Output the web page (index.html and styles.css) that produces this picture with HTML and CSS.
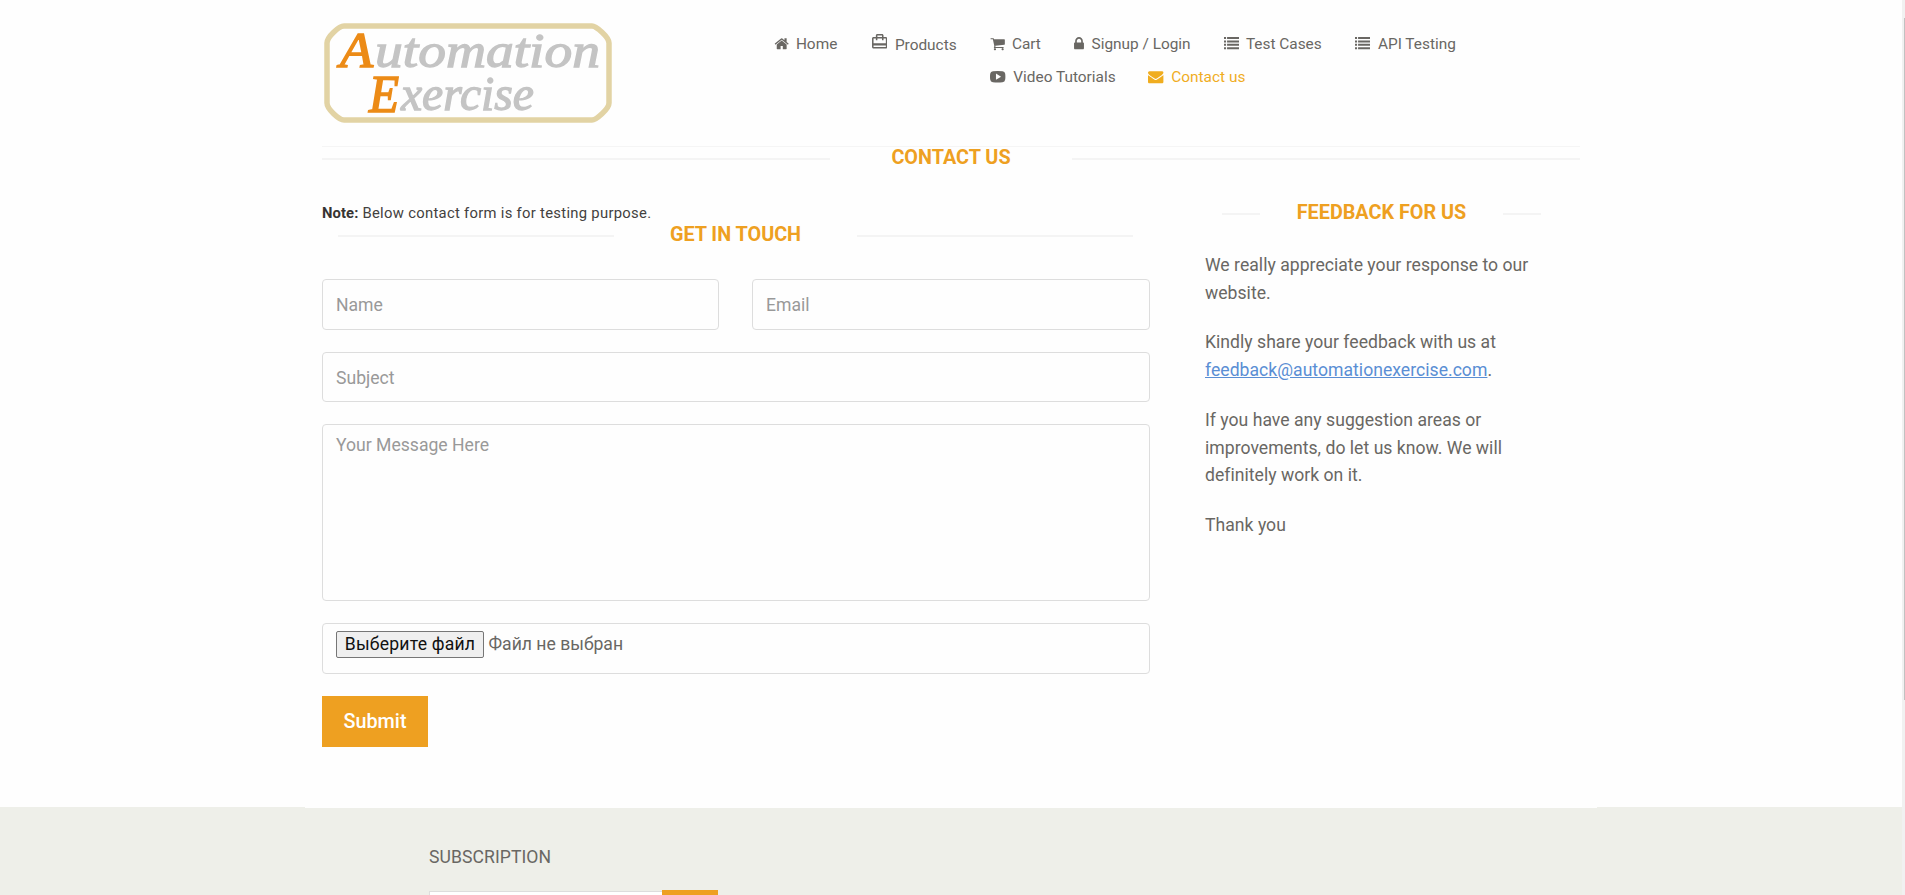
FILE: index.html
```html
<!DOCTYPE html>
<html lang="en">
<head>
<meta charset="utf-8">
<title>Automation Exercise - Contact Us</title>
<link rel="stylesheet" href="styles.css">
</head>
<body>
<div class="page">
  <header class="header container">
    <svg class="logo" width="288" height="100" viewBox="0 0 288 100" role="img" aria-label="Automation Exercise">
      <path class="logo-frame" d="M20 3H268C272 3 285 14 285 20V80C285 86 272 97 268 97H20C15 97 3 86 3 80V20C3 14 15 3 20 3Z"/>
      <g class="logo-text">
        <text class="logo-cap" x="16" y="44" font-size="50" textLength="33" lengthAdjust="spacingAndGlyphs">A</text>
        <text x="51" y="44" font-size="49" textLength="225" lengthAdjust="spacingAndGlyphs">utomation</text>
        <text class="logo-cap" x="45" y="89" font-size="52" textLength="30" lengthAdjust="spacingAndGlyphs">E</text>
        <text x="77" y="87" font-size="49" textLength="133" lengthAdjust="spacingAndGlyphs">xercise</text>
      </g>
    </svg>
    <nav class="nav">
      <ul class="nav-row nav-row-first">
        <li class="tight"><svg class="icon" viewBox="0 0 1792 1792"><path d="M1472 992v480q0 26-19 45t-45 19h-384v-384h-256v384h-384q-26 0-45-19t-19-45v-480q0-1 .5-3t.5-3l575-474 575 474q1 2 1 6zm223-69l-62 74q-8 9-21 11h-3q-13 0-21-7l-692-577-692 577q-12 8-24 7-13-2-21-11l-62-74q-8-10-7-23.500t11-21.500l719-599q32-26 76-26t76 26l244 204v-195q0-14 9-23t23-9h192q14 0 23 9t9 23v408l219 182q10 8 11 21.500t-7 23.500z"/></svg><span>Home</span></li>
        <li class="products"><svg class="icon-travel" viewBox="2 2 20 19"><path d="M20 6h-3V4c0-1.110-.89-2-2-2H9c-1.110 0-2 .89-2 2v2H4c-1.110 0-2 .89-2 2v11c0 1.110.89 2 2 2h16c1.110 0 2-.89 2-2V8c0-1.110-.89-2-2-2zM9 4h6v2H9V4zm11 15H4v-2h16v2zm0-5H4V8h3v2h2V8h6v2h2V8h3v6z"/></svg><span>Products</span></li>
        <li class="tight shift"><svg class="icon" viewBox="0 0 1792 1792"><path d="M704 1536q0 52-38 90t-90 38-90-38-38-90 38-90 90-38 90 38 38 90zm896 0q0 52-38 90t-90 38-90-38-38-90 38-90 90-38 90 38 38 90zm128-1088v512q0 24-16.500 42.500t-40.500 21.500l-1044 122q13 60 13 70 0 16-24 64h920q26 0 45 19t19 45-19 45-45 19h-1024q-26 0-45-19t-19-45q0-11 8-31.500t16-36 21.500-40 15.500-29.500l-177-823h-204q-26 0-45-19t-19-45 19-45 45-19h256q16 0 28.500 6.500t19.500 15.500 13 24.500 8 26 5.500 29.500 4.500 26h1201q26 0 45 19t19 45z"/></svg><span>Cart</span></li>
        <li><svg class="icon icon-lock" viewBox="320 0 1152 1792"><path d="M640 768h512v-192q0-106-75-181t-181-75-181 75-75 181v192zm832 96v576q0 40-28 68t-68 28h-960q-40 0-68-28t-28-68v-576q0-40 28-68t68-28h32v-192q0-184 132-316t316-132 316 132 132 316v192h32q40 0 68 28t28 68z"/></svg><span>Signup / Login</span></li>
        <li class="tight"><svg class="icon" viewBox="0 -1 15 15"><path d="M0 0h2v2H0zM3 0h12v2H3zM0 3.300h2v2H0zM3 3.300h12v2H3zM0 6.600h2v2H0zM3 6.600h12v2H3zM0 9.900h2v2H0zM3 9.900h12v2H3z"/></svg><span>Test Cases</span></li>
        <li><svg class="icon" viewBox="0 -1 15 15"><path d="M0 0h2v2H0zM3 0h12v2H3zM0 3.300h2v2H0zM3 3.300h12v2H3zM0 6.600h2v2H0zM3 6.600h12v2H3zM0 9.900h2v2H0zM3 9.900h12v2H3z"/></svg><span>API Testing</span></li>
      </ul>
      <ul class="nav-row nav-row-second">
        <li><svg class="icon" viewBox="0 0 16 16"><path fill-rule="evenodd" d="M3 2.300Q8 1.800 13 2.300Q15.500 2.300 15.800 5Q16.200 8 15.800 11Q15.500 13.700 13 13.700Q8 14.200 3 13.700Q.5 13.700 .2 11Q-.2 8 .2 5Q.5 2.300 3 2.300ZM6.200 4.800V11.200L11.500 8Z"/></svg><span>Video Tutorials</span></li>
        <li class="active"><svg class="icon" viewBox="0 0 1792 1792"><path d="M1792 710v794q0 66-47 113t-113 47h-1472q-66 0-113-47t-47-113v-794q44 49 101 87 362 246 497 345 57 42 92.500 65.500t94.500 48 110 24.500h2q51 0 110-24.500t94.500-48 92.500-65.500q170-123 498-345 57-39 100-87zm0-294q0 79-49 151t-122 123q-376 261-468 325-10 7-42.500 31t-54 38.500-52 32.500-57.500 27-50 9h-2q-23 0-50-9t-57.500-27-52-32.500-54-38.500-42.500-31q-91-64-262-182.500t-205-142.500q-62-42-117-115.500t-55-136.500q0-78 41.500-130t118.500-52h1472q65 0 112.500 47t47.500 113z"/></svg><span>Contact us</span></li>
      </ul>
    </nav>
  </header>

  <main class="container main">
    <h2 class="title title-page"><span>Contact Us</span></h2>
    <div class="columns">
      <section class="contact">
        <p class="note"><b>Note:</b> Below contact form is for testing purpose.</p>
        <h2 class="title title-form"><span>Get In Touch</span></h2>
        <form class="form">
          <div class="pair">
            <input class="field" type="text" placeholder="Name">
            <input class="field" type="email" placeholder="Email">
          </div>
          <input class="field field-subject" type="text" placeholder="Subject">
          <textarea class="field field-message" placeholder="Your Message Here"></textarea>
          <div class="field field-file"><button class="file-button" type="button">Выберите файл</button><span class="file-name">Файл не выбран</span></div>
          <button class="submit" type="button">Submit</button>
        </form>
      </section>
      <aside class="feedback">
        <h2 class="title title-feedback"><span>Feedback For Us</span></h2>
        <p>We really appreciate your response to our<br>website.</p>
        <p>Kindly share your feedback with us at<br><a href="#">feedback@automationexercise.com</a>.</p>
        <p>If you have any suggestion areas or<br>improvements, do let us know. We will<br>definitely work on it.</p>
        <p>Thank you</p>
      </aside>
    </div>
  </main>

  <footer class="footer">
    <h2 class="footer-title">Subscription</h2>
    <div class="subscribe"><div class="subscribe-input"></div><div class="subscribe-button"></div></div>
  </footer>
</div>
<div class="scrollbar"><div class="scroll-thumb"></div></div>
</body>
</html>
```
FILE: styles.css
```css
* { box-sizing: border-box; }
html, body { height: 100%; }
body {
  margin: 0;
  display: flex;
  height: 895px;
  overflow: hidden;
  background: #fefefe;
  color: #696763;
  font-family: Roboto, "Open Sans", sans-serif;
}
h2, p, ul { margin: 0; padding: 0; }
.page { width: 1902px; height: 895px; overflow: hidden; display: flex; flex-direction: column; }
.container { width: 1258px; margin: 0 auto; flex: none; }

.header { display: flex; height: 147px; border-bottom: 1px solid #f5f5f5; }
.logo { margin: 23px 0 0 2px; flex: none; }
.logo-frame { fill: none; stroke: #e2d3a4; stroke-width: 5.5; stroke-linejoin: round; }
.logo-text {
  font-family: "Liberation Serif", serif; font-style: italic;
  fill: #c4c4c4; stroke: #c4c4c4; stroke-width: 1.3;
}
.logo-text .logo-cap { fill: #ec8b17; stroke: #ec8b17; stroke-width: 1.6; }

.nav { margin-left: 162px; padding-top: 34px; font-size: 15.4px; line-height: 20px; }
.nav-row { display: grid; list-style: none; height: 20px; }
.nav-row-first { grid-template-columns: 98px 119px 83px 150px 131px 110px; margin-bottom: 13px; }
.nav-row-second { grid-template-columns: 158px 110px; margin-left: 216.4px; }
.nav li { display: flex; gap: 7.5px; white-space: nowrap; }
.nav .tight { gap: 6.5px; }
.nav .shift { margin-left: -1px; }
.nav .active { color: #f0ad1f; }
.icon { width: 15.4px; height: 15.4px; margin-top: 2px; fill: currentColor; flex: none; }
.icon-lock { width: 10px; }
.icon-travel { width: 15.4px; height: 14.6px; fill: currentColor; flex: none; }
.products span { padding-top: 1px; }

.main { height: 661px; }
.title {
  display: flex; align-items: center; height: 20px;
  color: #eea021; font-size: 19.8px; line-height: 20px; font-weight: 700;
  text-transform: uppercase; white-space: nowrap;
}
.title span { flex: 1; text-align: center; padding-top: 2px; }
.title::before, .title::after { content: ""; height: 2px; margin-top: 4px; background: #f4f4f4; flex: none; }
.title-page::before, .title-page::after { width: 508px; }
.title-form { margin: 1px 17px 0 16px; }
.title-form::before, .title-form::after { width: 276px; }
.title-feedback { margin: 0 39px 30px 17px; }
.title-feedback::before, .title-feedback::after { width: 38px; }

.columns { display: flex; gap: 55px; padding-top: 35px; }
.contact { width: 828px; padding-top: 1px; }
.note { color: #434140; font-size: 14.8px; line-height: 20px; letter-spacing: .3px; }
.note b { color: #363432; letter-spacing: .1px; }
.form { display: flex; flex-direction: column; gap: 22px; margin-top: 35px; }
.pair { display: grid; grid-template-columns: 397px 398px; gap: 33px; }
.field {
  display: block; width: 100%; height: 51px; padding: 6px 13px;
  border: 1px solid #ddd; border-radius: 4px; background: #fefefe;
  color: #696763; font: 17.6px/25px Roboto, sans-serif; resize: none;
}
.field::placeholder { color: #999; opacity: 1; }
.field-subject { height: 50px; padding-top: 7px; padding-bottom: 5px; }
.field-message { height: 177px; padding-top: 8px; }
.field-file { display: flex; gap: 4.500px; padding-top: 7px; white-space: nowrap; }
.file-name { padding-top: 1px; }
.file-button {
  width: 148px; height: 27px; padding: 0; border: 1px solid #767676; border-radius: 2px;
  background: #efefef; color: #111; font: 17.6px/25px Roboto, sans-serif; letter-spacing: .2px;
}
.submit {
  width: 106px; height: 51px; padding: 0; border: 0; background: #eea021; color: #fff;
  font: 500 19.8px/51px Roboto, sans-serif;
}

.feedback { width: 375px; }
.feedback p { margin-bottom: 22.300px; font-size: 17.6px; line-height: 27.600px; letter-spacing: .02px; white-space: nowrap; }
.feedback a { color: #5a8ed4; text-decoration: underline; }

.footer {
  position: relative; flex: none; height: 87px; padding: 37px 0 0 429px;
  background: #eeefe9; box-shadow: 0 -1px #eeefe9;
}
.footer::before {
  content: ""; position: absolute; left: 305px; top: -1px; width: 1292px; height: 1px; background: #fefefe;
}
.footer-title { font-size: 17.6px; line-height: 24px; font-weight: 400; letter-spacing: .06px; text-transform: uppercase; }
.subscribe { display: flex; margin-top: 21px; }
.subscribe-input { width: 233px; height: 45px; margin-top: 1px; border: 1px solid #ddd; border-right: 0; background: #fff; }
.subscribe-button { width: 56px; height: 46px; background: #eea021; }

.scrollbar { width: 3px; height: 895px; padding: 18px 0 0 2px; background: #f1f1f1; flex: none; }
.scroll-thumb { width: 1px; height: 682px; background: #c1c1c1; }
```
